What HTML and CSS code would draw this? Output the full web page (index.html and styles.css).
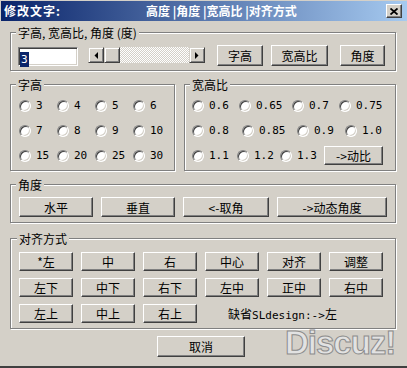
FILE: index.html
```html
<!DOCTYPE html>
<html lang="zh-CN">
<head>
  <meta charset="UTF-8" />
  <meta name="viewport" content="width=device-width, initial-scale=1.0"/>
  <title>修改文字</title>
  <link rel="stylesheet" href="styles.css">
</head>
<body>
  <div class="window">
    <div class="titlebar">
      <span class="title">修改文字:</span>
      <span class="title-tabs">高度 |角度 |宽高比 |对齐方式</span>
      <span class="close-btn">
        <svg width="8" height="7" viewBox="0 0 8 7"><path d="M0.5 0.5L7.5 6.5M7.5 0.5L0.5 6.5" stroke="#000" stroke-width="1.8"/></svg>
      </span>
    </div>

    <div class="content">
      <fieldset class="group group-main">
        <legend>字高, 宽高比, 角度 (度)</legend>
        <div class="main-row">
          <div class="textbox"><span class="selected">3</span></div>
          <div class="scrollbar">
            <span class="sb-arrow"><svg width="4" height="7" viewBox="0 0 4 7"><polygon points="4,0 4,7 0.5,3.5" fill="#000"/></svg></span>
            <span class="sb-thumb"></span>
            <span class="sb-track"></span>
            <span class="sb-arrow"><svg width="4" height="7" viewBox="0 0 4 7"><polygon points="0,0 0,7 3.5,3.5" fill="#000"/></svg></span>
          </div>
          <button class="btn btn-zg">字高</button>
          <button class="btn btn-kgb">宽高比</button>
          <button class="btn btn-jd">角度</button>
        </div>
      </fieldset>

      <div class="pair">
        <fieldset class="group group-size">
          <legend>字高</legend>
          <div class="radio-grid">
            <label class="radio"><span class="dot"></span><span class="num">3</span></label>
            <label class="radio"><span class="dot"></span><span class="num">4</span></label>
            <label class="radio"><span class="dot"></span><span class="num">5</span></label>
            <label class="radio"><span class="dot"></span><span class="num">6</span></label>
            <label class="radio"><span class="dot"></span><span class="num">7</span></label>
            <label class="radio"><span class="dot"></span><span class="num">8</span></label>
            <label class="radio"><span class="dot"></span><span class="num">9</span></label>
            <label class="radio"><span class="dot"></span><span class="num">10</span></label>
            <label class="radio"><span class="dot"></span><span class="num">15</span></label>
            <label class="radio"><span class="dot"></span><span class="num">20</span></label>
            <label class="radio"><span class="dot"></span><span class="num">25</span></label>
            <label class="radio"><span class="dot"></span><span class="num">30</span></label>
          </div>
        </fieldset>

        <fieldset class="group group-ratio">
          <legend>宽高比</legend>
          <div class="ratio-row row-1">
            <label class="radio"><span class="dot"></span><span class="num">0.6</span></label>
            <label class="radio"><span class="dot"></span><span class="num">0.65</span></label>
            <label class="radio"><span class="dot"></span><span class="num">0.7</span></label>
            <label class="radio"><span class="dot"></span><span class="num">0.75</span></label>
          </div>
          <div class="ratio-row row-2">
            <label class="radio"><span class="dot"></span><span class="num">0.8</span></label>
            <label class="radio"><span class="dot"></span><span class="num">0.85</span></label>
            <label class="radio"><span class="dot"></span><span class="num">0.9</span></label>
            <label class="radio"><span class="dot"></span><span class="num">1.0</span></label>
          </div>
          <div class="ratio-row row-3">
            <label class="radio"><span class="dot"></span><span class="num">1.1</span></label>
            <label class="radio"><span class="dot"></span><span class="num">1.2</span></label>
            <label class="radio"><span class="dot"></span><span class="num">1.3</span></label>
            <button class="btn btn-dyn">-&gt;动比</button>
          </div>
        </fieldset>
      </div>

      <fieldset class="group group-angle">
        <legend>角度</legend>
        <div class="angle-row">
          <button class="btn btn-w74">水平</button>
          <button class="btn btn-w74">垂直</button>
          <button class="btn btn-w86">&lt;-取角</button>
          <button class="btn btn-w110">-&gt;动态角度</button>
        </div>
      </fieldset>

      <fieldset class="group group-align">
        <legend>对齐方式</legend>
        <div class="align-grid">
          <button class="btn">*左</button>
          <button class="btn">中</button>
          <button class="btn">右</button>
          <button class="btn">中心</button>
          <button class="btn">对齐</button>
          <button class="btn">调整</button>
          <button class="btn">左下</button>
          <button class="btn">中下</button>
          <button class="btn">右下</button>
          <button class="btn">左中</button>
          <button class="btn">正中</button>
          <button class="btn">右中</button>
          <button class="btn">左上</button>
          <button class="btn">中上</button>
          <button class="btn">右上</button>
          <span class="default-note">缺省<span class="mono">SLdesign:-&gt;</span>左</span>
        </div>
      </fieldset>

      <button class="btn btn-cancel">取消</button>
    </div>

    <div class="watermark">Discuz!</div>
  </div>
</body>
</html>
```

FILE: styles.css
```css
* { box-sizing: border-box; }
body { margin: 0; font-family: "Noto Sans CJK SC", "DejaVu Sans", sans-serif; font-size: 12px; color: #000; }

.window { position: relative; width: 407px; height: 368px; background: #d4d0c8; overflow: hidden; border-bottom: 2px solid #404040; }

/* caption */
.titlebar { display: flex; align-items: center; height: 20px; margin: 1px 0 0 1px; padding-left: 3px; background: linear-gradient(to right, #0a246a, #a6caf0); color: #fff; font-weight: bold; line-height: 14px; }
.title { width: 142px; letter-spacing: 1px; }
.title-tabs { flex: 1; }
.close-btn { display: flex; align-items: center; justify-content: center; width: 16px; height: 14px; margin-right: 5px; background: #d4d0c8; border: 1px solid; border-color: #fff #404040 #404040 #fff; box-shadow: inset -1px -1px 0 #808080; }

.content { padding: 4px 11px 0 10px; }

/* group boxes */
.group { margin: 0; min-width: 0; border: 1px solid #808080; box-shadow: inset 1px 1px 0 #fff, 1px 1px 0 #fff; }
.group legend { padding: 0 2px; line-height: 15px; background: #d4d0c8; }
.group-main { padding: 5px 0 4px 7px; }
.group-main legend { margin-left: -2px; }
.pair { display: flex; gap: 9px; margin-top: 6px; }
.group-size { width: 165px; padding: 1px 0 2px 8px; }
.group-size legend { margin-left: -3px; }
.group-ratio { flex: 1; padding: 1px 0 2px 7px; }
.group-ratio legend { margin-left: -2px; }
.group-angle { margin-top: 6px; padding: 5px 0 5px 8px; }
.group-angle legend { margin-left: -3px; }
.group-align { margin-top: 8px; padding: 6px 0 5px 8px; }
.group-align legend { margin-left: -2px; }

/* buttons */
.btn { display: flex; align-items: center; justify-content: center; padding: 0; font: inherit; color: #000; background: #d4d0c8; border: 1px solid; border-color: #fff #404040 #404040 #fff; box-shadow: inset -1px -1px 0 #808080; border-radius: 0; }

/* top row */
.main-row { display: flex; align-items: flex-start; }
.textbox { width: 60px; height: 19px; margin-top: 2px; background: #fff; border: 1px solid; border-color: #808080 #fff #fff #808080; box-shadow: inset 1px 1px 0 #404040, inset -1px -1px 0 #d4d0c8; padding: 1px; }
.selected { display: inline-block; padding: 0 1px; line-height: 15px; background: #0a246a; color: #fff; font-family: "DejaVu Sans Mono", monospace; font-size: 11px; }
.scrollbar { display: flex; width: 117px; height: 16px; margin: 2px 0 0 10px; }
.sb-arrow, .sb-thumb { display: flex; align-items: center; justify-content: center; width: 16px; height: 16px; background: #d4d0c8; border: 1px solid; border-color: #d4d0c8 #404040 #404040 #d4d0c8; box-shadow: inset 1px 1px 0 #fff, inset -1px -1px 0 #808080; }
.sb-track { flex: 1; background: repeating-conic-gradient(#fff 0 25%, #d4d0c8 0 50%) 0 0 / 2px 2px; }
.main-row .btn { height: 21px; }
.btn-zg { width: 46px; margin-left: 12px; }
.btn-kgb { width: 57px; margin-left: 8px; }
.btn-jd { width: 45px; margin-left: 12px; }

/* radios */
.radio-grid { display: grid; grid-template-columns: repeat(4, 38px); grid-auto-rows: 25px; }
.radio { display: flex; align-items: center; gap: 5px; }
.dot { flex: none; width: 12px; height: 12px; border-radius: 50%; background: #fff; border: 1px solid; border-color: #808080 #fff #fff #808080; box-shadow: inset 1px 1px 0 #404040, inset -1px -1px 0 #d4d0c8; }
.num, .mono { font-family: "DejaVu Sans Mono", monospace; font-size: 11px; }
.ratio-row { display: grid; height: 25px; align-items: center; }
.row-1 { grid-template-columns: 47px 53px 47px auto; }
.row-2 { grid-template-columns: 50px 55px 48px auto; }
.row-3 { grid-template-columns: 45px 43px 44px auto; }
.btn-dyn { width: 59px; height: 19px; }

/* angle */
.angle-row { display: flex; gap: 8px; }
.angle-row .btn { height: 20px; }
.btn-w74 { width: 74px; }
.btn-w86 { width: 86px; }
.btn-w110 { width: 110px; }

/* alignment */
.align-grid { display: grid; grid-template-columns: repeat(6, 54px); grid-auto-rows: 19px; gap: 7px 8px; }
.default-note { grid-column: 4 / span 3; align-self: center; padding-left: 23px; }

.btn-cancel { width: 88px; height: 21px; margin: 7px 0 0 147px; }

.watermark { position: absolute; left: 285px; top: 326px; font: bold 33px/1 "Liberation Sans", sans-serif; letter-spacing: -1px; color: #e2e2e2; -webkit-text-stroke: 1px #8c8c8c; }
```
